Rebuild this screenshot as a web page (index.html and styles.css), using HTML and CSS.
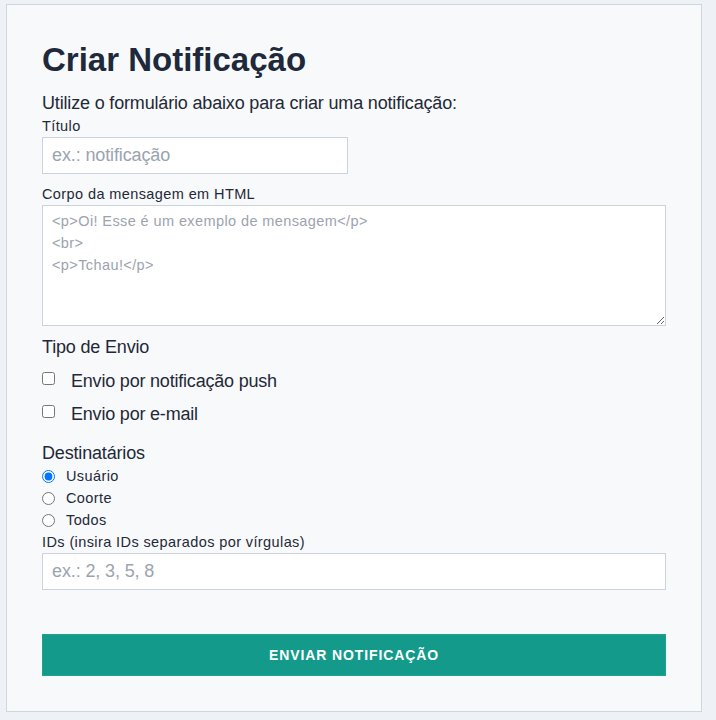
FILE: index.html
```html
<!DOCTYPE html>
<html lang="pt-BR">
<head>
<meta charset="utf-8">
<title>Criar Notificação</title>
<link rel="stylesheet" href="styles.css">
</head>
<body>
<main class="card">
  <h1 class="title">Criar Notificação</h1>
  <p class="subtitle">Utilize o formulário abaixo para criar uma notificação:</p>
  <form class="form">
    <label class="label" for="titulo">Título</label>
    <input class="input input-half" id="titulo" type="text" placeholder="ex.: notificação">

    <label class="label label-gap" for="corpo">Corpo da mensagem em HTML</label>
    <textarea class="textarea" id="corpo" placeholder="<p>Oi! Esse é um exemplo de mensagem</p>
<br>
<p>Tchau!</p>"></textarea>

    <div class="section-title section-envio">Tipo de Envio</div>
    <label class="check-row"><input type="checkbox" class="check"><span>Envio por notificação push</span></label>
    <label class="check-row"><input type="checkbox" class="check"><span>Envio por e-mail</span></label>

    <div class="section-title section-dest">Destinatários</div>
    <label class="radio-row"><input type="radio" name="dest" class="radio" checked><span>Usuário</span></label>
    <label class="radio-row"><input type="radio" name="dest" class="radio"><span>Coorte</span></label>
    <label class="radio-row"><input type="radio" name="dest" class="radio"><span>Todos</span></label>

    <label class="label label-ids" for="ids">IDs (insira IDs separados por vírgulas)</label>
    <input class="input" id="ids" type="text" placeholder="ex.: 2, 3, 5, 8">

    <button type="button" class="submit">ENVIAR NOTIFICAÇÃO</button>
  </form>
</main>
</body>
</html>
```

FILE: styles.css
```css
* { box-sizing: border-box; }

html, body {
  margin: 0;
  background: #eef1f6;
}

body {
  padding: 4px 14px 8px 6px;
  font-family: "Liberation Sans", Arial, sans-serif;
  color: #1f2937;
}

.card {
  width: 696px;
  background: #f8f9fb;
  border: 1px solid #cfd6e0;
  padding: 35px 35px 35px 35px;
}

.title {
  margin: 0;
  font-size: 33px;
  line-height: 40px;
  font-weight: 700;
  color: #1e293b;
}

.subtitle {
  margin: 12px 0 0;
  font-size: 18px;
  line-height: 22px;
  letter-spacing: -0.17px;
}

.form {
  display: flex;
  flex-direction: column;
  align-items: stretch;
}

.label {
  display: block;
  margin-top: 4px;
  font-size: 14.5px;
  letter-spacing: 0.4px;
  line-height: 16px;
  color: #1f2937;
}

.label-gap { margin-top: 12px; }
.label-ids { margin-top: 3px; }

.input {
  display: block;
  margin-top: 3px;
  height: 37px;
  width: 100%;
  padding: 0 9px;
  border: 1px solid #cbd3df;
  background: #fff;
  font-family: "Liberation Sans", Arial, sans-serif;
  font-size: 18px;
  letter-spacing: -0.12px;
  color: #1f2937;
  border-radius: 0;
  outline: none;
}

.input-half { width: 306px; }

.input::placeholder,
.textarea::placeholder {
  color: #9ca3af;
}

.textarea {
  display: block;
  margin-top: 3px;
  width: 100%;
  height: 121px;
  padding: 4px 9px;
  border: 1px solid #cbd3df;
  background: #fff;
  font-family: "Liberation Sans", Arial, sans-serif;
  font-size: 14.5px;
  letter-spacing: 0.4px;
  line-height: 22px;
  border-radius: 0;
  outline: none;
}

.section-title {
  font-size: 18px;
  line-height: 22px;
  letter-spacing: -0.17px;
}

.section-envio { margin-top: 10px; margin-bottom: 1px; }
.section-dest { margin-top: 17px; margin-bottom: 1px; }

.check-row {
  display: flex;
  align-items: flex-start;
  gap: 16px;
  height: 33px;
  padding-top: 11px;
  font-size: 18px;
  line-height: 22px;
  letter-spacing: -0.2px;
}

.check {
  margin: 2px 0 0;
  width: 13px;
  height: 13px;
  flex: none;
}

.radio-row {
  display: flex;
  align-items: center;
  gap: 11px;
  height: 22px;
  font-size: 14.5px;
  letter-spacing: 0.4px;
  line-height: 16px;
}

.radio {
  margin: 0;
  width: 13px;
  height: 13px;
  flex: none;
}

.submit {
  margin-top: 44px;
  height: 42px;
  width: 100%;
  border: 1px solid #1ca392;
  background: #139a8b;
  color: #fff;
  font-family: "Liberation Sans", Arial, sans-serif;
  font-size: 14px;
  font-weight: 700;
  letter-spacing: 0.9px;
  cursor: pointer;
}
```
